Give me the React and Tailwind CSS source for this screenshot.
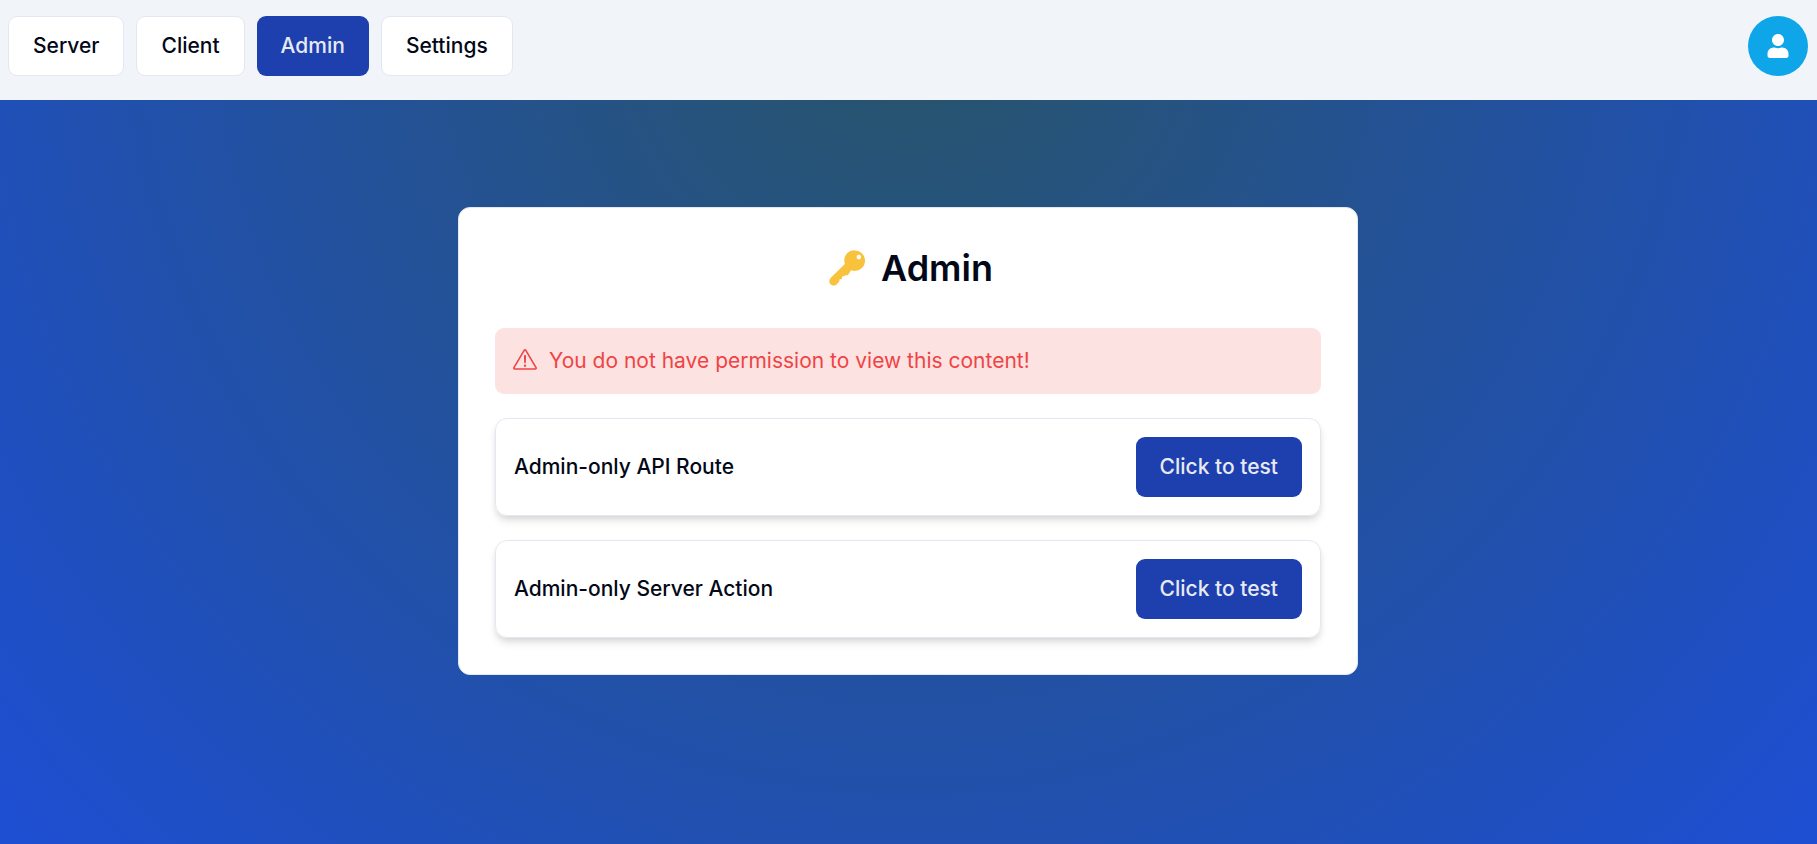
import { FaUser } from "react-icons/fa";
import { RxExclamationTriangle } from "react-icons/rx";

const links = [
  { label: "Server", href: "#server" },
  { label: "Client", href: "#client" },
  { label: "Admin", href: "#admin", active: true },
  { label: "Settings", href: "#settings" },
];

function NavLink({ label, href, active }) {
  const tone = active
    ? "bg-[#1e40af] text-[#e8eaf2]"
    : "border border-[#e2e8f0] bg-white";
  return (
    <a
      href={href}
      aria-current={active ? "page" : undefined}
      className={`flex h-15 items-center rounded-[9px] px-6 font-medium ${tone}`}
    >
      {label}
    </a>
  );
}

function Navbar() {
  return (
    <header className="flex h-[100px] items-start justify-between bg-[#f1f5f9] pt-4 pr-[9px] pl-2">
      <nav className="flex gap-x-3">
        {links.map((link) => (
          <NavLink key={link.label} {...link} />
        ))}
      </nav>
      <button
        type="button"
        aria-label="Account"
        className="flex size-15 items-center justify-center rounded-full bg-[#0ea5e9] text-white"
      >
        <FaUser size={24} />
      </button>
    </header>
  );
}

function KeyIcon() {
  return (
    <svg viewBox="-6 0 42 36" className="h-9 w-[42px]" aria-hidden="true">
      <path
        fill="#f9c23c"
        fillRule="evenodd"
        d="M25.5 0.2a10.2 10.2 0 0 0-9.6 13.7L1.6 28.1a4.3 4.3 0 0 0 0 6.2c1.6 1.7 4.6 1.7 6.2-.1l2.1-2.1c.5-.5.6-1.1.4-1.8-.1-.6.3-1.1.9-1.1h.8c.6 0 1-.4 1-1v-.7c0-.7.4-1.2 1.1-1.2.6.1 1.1-.1 1.6-.5.7-.8 1.3-1.2 1.9-.7.5.3 1 .2 1.4-.2l3.1-4.7a10.2 10.2 0 1 0 3.4-19.7Zm4.3 4.6a2.3 2.3 0 1 1 0 4.6 2.3 2.3 0 0 1 0-4.6Z"
      />
    </svg>
  );
}

function TestRow({ label }) {
  return (
    <div className="flex items-center justify-between rounded-xl border border-[#e2e8f0] p-[18px] shadow-[0_6px_9px_-1px_rgba(0,0,0,0.1),0_3px_6px_-2px_rgba(0,0,0,0.1)]">
      <p className="font-medium">{label}</p>
      <button
        type="button"
        className="h-15 rounded-[9px] bg-[#1e40af] px-6 font-medium text-[#e8eaf2]"
      >
        Click to test
      </button>
    </div>
  );
}

export default function App() {
  return (
    <div className="flex min-h-screen flex-col bg-[radial-gradient(ellipse_71%_155%_at_top,#285468,#1d4ed8)] font-['Inter',sans-serif] text-[21px] leading-[30px] text-[#020817]">
      <Navbar />
      <main className="flex flex-1 flex-col items-center pt-[107px] pr-[17px] pb-12 pl-4">
        <section className="w-full max-w-[900px] rounded-xl border border-[#e2e8f0] bg-white p-9">
          <h1 className="flex items-center justify-center gap-4 text-4xl leading-[48px] font-semibold">
            <KeyIcon />
            Admin
          </h1>
          <div className="mt-9 flex flex-col gap-6">
            <div
              role="alert"
              className="flex items-center gap-3 rounded-[9px] bg-[#fde2e2] p-[18px] text-[#ef4444]"
            >
              <RxExclamationTriangle size={24} />
              <p>You do not have permission to view this content!</p>
            </div>
            <TestRow label="Admin-only API Route" />
            <TestRow label="Admin-only Server Action" />
          </div>
        </section>
      </main>
    </div>
  );
}
